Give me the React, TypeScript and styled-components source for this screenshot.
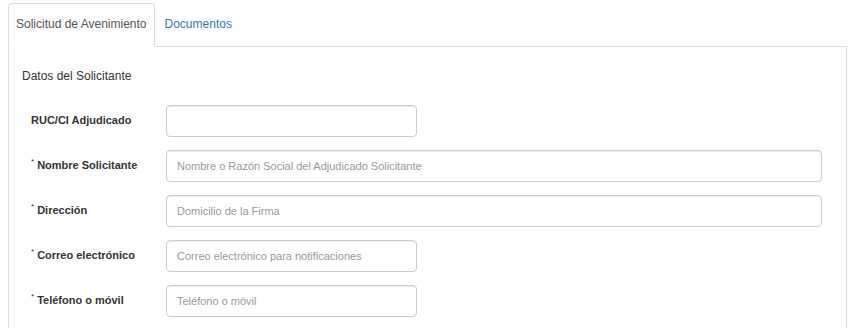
import React from "react";
import styled, { createGlobalStyle } from "styled-components";

const Global = createGlobalStyle`
  html, body { margin: 0; padding: 0; background: #fff; }
  body { font-family: "Liberation Sans", Arial, Helvetica, sans-serif; color: #333; }
  * { box-sizing: border-box; }
`;

const Page = styled.div`
  padding: 3px 2px 0 8px;
`;

const TabList = styled.ul`
  display: flex;
  margin: 0;
  padding: 0;
  list-style: none;
  position: relative;
  z-index: 1;
`;

const Tab = styled.li<{ $active?: boolean }>`
  margin: 0 2px -1px 0;
  padding: 12px 7px 14px;
  font-size: 12px;
  line-height: 16px;
  border: 1px solid ${(p) => (p.$active ? "#ddd" : "transparent")};
  border-bottom-color: ${(p) => (p.$active ? "#fff" : "transparent")};
  border-radius: 4px 4px 0 0;
  background: ${(p) => (p.$active ? "#fff" : "transparent")};
  color: ${(p) => (p.$active ? "#555" : "#337ab7")};
  cursor: pointer;
`;

const Panel = styled.div`
  border: 1px solid #ddd;
  padding: 21px 0 40px 13px;
`;

const SectionTitle = styled.div`
  font-size: 12px;
  line-height: 16px;
  color: #333;
`;

const Form = styled.div`
  display: flex;
  flex-direction: column;
  gap: 13px;
  margin-top: 21px;
  padding-left: 9px;
`;

const Row = styled.div`
  display: grid;
  grid-template-columns: 135px 1fr;
  align-items: center;
`;

const Label = styled.label`
  font-size: 11px;
  line-height: 16px;
  font-weight: bold;
  color: #333;
  padding-bottom: 2px;
`;

const Req = styled.span`
  font-size: 8px;
  font-weight: normal;
  vertical-align: top;
  line-height: 10px;
  margin-right: 3px;
`;

const Input = styled.input<{ $wide?: boolean }>`
  width: ${(p) => (p.$wide ? "656px" : "251px")};
  height: 32px;
  padding: 0 10px;
  border: 1px solid #ccc;
  border-radius: 4px;
  box-shadow: inset 0 1px 1px rgba(0, 0, 0, 0.075);
  font-family: "Liberation Sans", Arial, Helvetica, sans-serif;
  font-size: 11px;
  color: #555;
  outline: none;
  &::placeholder { color: #999; }
`;

const fields = [
  { label: "RUC/CI Adjudicado", req: false, ph: "", wide: false },
  { label: "Nombre Solicitante", req: true, ph: "Nombre o Razón Social del Adjudicado Solicitante", wide: true },
  { label: "Dirección", req: true, ph: "Domicilio de la Firma", wide: true },
  { label: "Correo electrónico", req: true, ph: "Correo electrónico para notificaciones", wide: false },
  { label: "Teléfono o móvil", req: true, ph: "Teléfono o móvil", wide: false },
];

export default function App() {
  return (
    <Page>
      <Global />
      <TabList>
        <Tab $active>Solicitud de Avenimiento</Tab>
        <Tab>Documentos</Tab>
      </TabList>
      <Panel>
        <SectionTitle>Datos del Solicitante</SectionTitle>
        <Form>
          {fields.map((f) => (
            <Row key={f.label}>
              <Label>
                {f.req && <Req>*</Req>}
                {f.label}
              </Label>
              <Input $wide={f.wide} placeholder={f.ph} />
            </Row>
          ))}
        </Form>
      </Panel>
    </Page>
  );
}
